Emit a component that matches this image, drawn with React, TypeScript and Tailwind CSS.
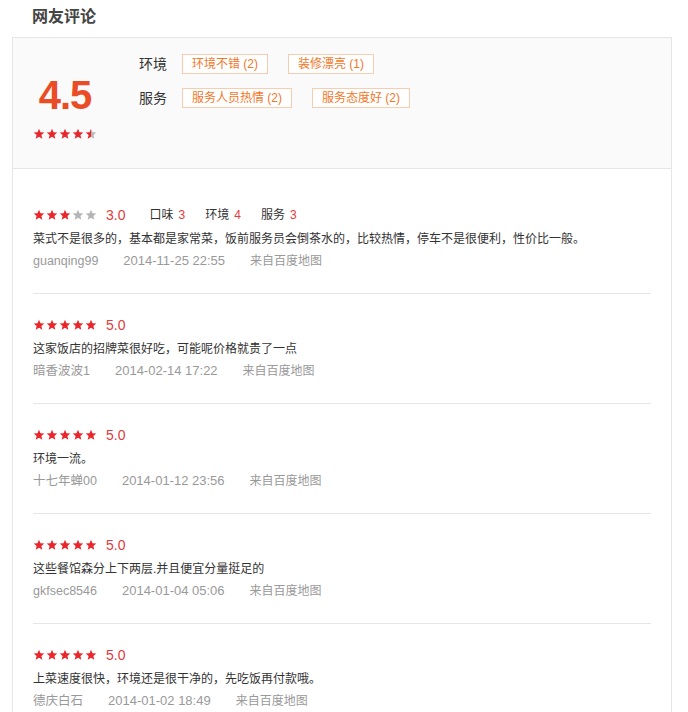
import React from "react";

const FONT = '"Liberation Sans", "Noto Sans CJK SC", Arial, sans-serif';

const STAR_PATH = "M12 1.5l3 7.1 7.6.6-5.8 5 1.8 7.4L12 17.6l-6.6 4 1.8-7.4-5.8-5 7.6-.6z";

function Star({ fill, size = 12 }: { fill: "full" | "half" | "empty"; size?: number }) {
  const id = React.useId();
  return (
    <svg width={size} height={size} viewBox="0 0 24 24" className="block">
      {fill === "half" && (
        <defs>
          <linearGradient id={id} x1="0" x2="1" y1="0" y2="0">
            <stop offset="50%" stopColor="#e8262b" />
            <stop offset="50%" stopColor="#b5b5b5" />
          </linearGradient>
        </defs>
      )}
      <path
        d={STAR_PATH}
        fill={fill === "full" ? "#e8262b" : fill === "empty" ? "#b5b5b5" : `url(#${id})`}
      />
    </svg>
  );
}

function Stars({ value }: { value: number }) {
  return (
    <div className="flex items-center gap-[1px]">
      {[0, 1, 2, 3, 4].map((i) => {
        const f = value - i >= 1 ? "full" : value - i >= 0.5 ? "half" : "empty";
        return <Star key={i} fill={f} size={12} />;
      })}
    </div>
  );
}

function Tag({ children }: { children: React.ReactNode }) {
  return (
    <span className="h-[20px] px-[9px] border border-[#f7cdb0] bg-white text-[#f2782a] text-[12px] leading-[18px] whitespace-nowrap">
      {children}
    </span>
  );
}

type Review = {
  score: number;
  aspects?: [string, number][];
  text: string;
  user: string;
  date: string;
};

const reviews: Review[] = [
  {
    score: 3,
    aspects: [
      ["口味", 3],
      ["环境", 4],
      ["服务", 3],
    ],
    text: "菜式不是很多的，基本都是家常菜，饭前服务员会倒茶水的，比较热情，停车不是很便利，性价比一般。",
    user: "guanqing99",
    date: "2014-11-25 22:55",
  },
  {
    score: 5,
    text: "这家饭店的招牌菜很好吃，可能呢价格就贵了一点",
    user: "暗香波波1",
    date: "2014-02-14 17:22",
  },
  {
    score: 5,
    text: "环境一流。",
    user: "十七年蝉00",
    date: "2014-01-12 23:56",
  },
  {
    score: 5,
    text: "这些餐馆森分上下两层.并且便宜分量挺足的",
    user: "gkfsec8546",
    date: "2014-01-04 05:06",
  },
  {
    score: 5,
    text: "上菜速度很快，环境还是很干净的，先吃饭再付款哦。",
    user: "德庆白石",
    date: "2014-01-02 18:49",
  },
];

function ReviewItem({ r, first }: { r: Review; first: boolean }) {
  return (
    <div className={first ? "pt-[36px] pb-[21px]" : "pt-[21px] pb-[21px] border-t border-[#e6e6e6]"}>
      <div className="h-[20px] flex items-center">
        <Stars value={r.score} />
        <span className="ml-[9px] text-[14px] leading-[20px] text-[#e4393c]">{r.score.toFixed(1)}</span>
        {r.aspects && (
          <div className="ml-[24px] flex items-center gap-[20px]">
            {r.aspects.map(([k, v]) => (
              <span key={k} className="text-[12px] leading-[20px] text-[#333]">
                {k}
                <span className="ml-[5px] text-[12px] text-[#e4393c]">{v}</span>
              </span>
            ))}
          </div>
        )}
      </div>
      <div className="mt-[3px] text-[12px] leading-[22px] text-[#333]">{r.text}</div>
      <div className="flex text-[12px] leading-[22px] text-[#999]">
        <span className="text-[12.5px]">{r.user}</span>
        <span className="ml-[25px] text-[13px]">{r.date}</span>
        <span className="ml-[25px]">来自百度地图</span>
      </div>
    </div>
  );
}

export default function App() {
  return (
    <div className="w-[688px] h-[712px] overflow-hidden bg-white" style={{ fontFamily: FONT }}>
      <div className="h-[37px] pl-[32px] text-[16px] font-bold leading-[34px] text-[#444]">网友评论</div>
      <div className="ml-[12px] w-[660px] border border-[#e6e6e6]">
        <div className="h-[131px] bg-[#fafafa] border-b border-[#e6e6e6] flex pl-[20px]">
          <div className="w-[64px] flex flex-col items-center">
            <div className="mt-[37px] text-[40px] leading-[40px] font-bold text-[#ea4c26] tracking-[-1px]">4.5</div>
            <div className="mt-[13px]">
              <Stars value={4.5} />
            </div>
          </div>
          <div className="ml-[42px] pt-[16px] flex flex-col gap-[14px]">
            <div className="flex items-center h-[20px]">
              <span className="text-[14px] text-[#333] w-[43px]">环境</span>
              <div className="flex gap-[20px]">
                <Tag>环境不错 (2)</Tag>
                <Tag>装修漂亮 (1)</Tag>
              </div>
            </div>
            <div className="flex items-center h-[20px]">
              <span className="text-[14px] text-[#333] w-[43px]">服务</span>
              <div className="flex gap-[20px]">
                <Tag>服务人员热情 (2)</Tag>
                <Tag>服务态度好 (2)</Tag>
              </div>
            </div>
          </div>
        </div>
        <div className="px-[20px]">
          {reviews.map((r, i) => (
            <ReviewItem key={i} r={r} first={i === 0} />
          ))}
        </div>
      </div>
    </div>
  );
}
